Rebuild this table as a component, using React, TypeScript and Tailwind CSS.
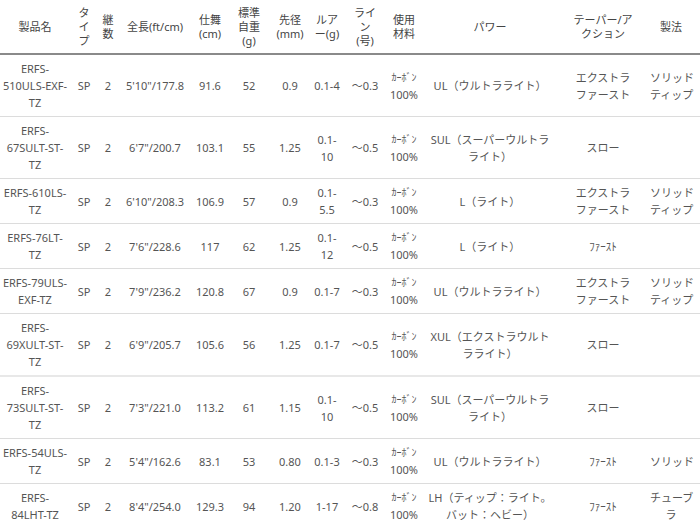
import React from "react";

type Row = {
  name: string[];
  len: string;
  close: string;
  wt: string;
  tip: string;
  lure: string[];
  line: string;
  power: string[];
  taper: string[];
  method: string[];
  thick?: boolean;
};

const rows: Row[] = [
  { name: ["ERFS-", "510ULS-EXF-", "TZ"], len: `5'10"/177.8`, close: "91.6", wt: "52", tip: "0.9", lure: ["0.1-4"], line: "〜0.3", power: ["UL（ウルトラライト）"], taper: ["エクストラ", "ファースト"], method: ["ソリッド", "ティップ"] },
  { name: ["ERFS-", "67SULT-ST-", "TZ"], len: `6'7"/200.7`, close: "103.1", wt: "55", tip: "1.25", lure: ["0.1-", "10"], line: "〜0.5", power: ["SUL（スーパーウルトラ", "ライト）"], taper: ["スロー"], method: [] },
  { name: ["ERFS-610LS-", "TZ"], len: `6'10"/208.3`, close: "106.9", wt: "57", tip: "0.9", lure: ["0.1-", "5.5"], line: "〜0.3", power: ["L（ライト）"], taper: ["エクストラ", "ファースト"], method: ["ソリッド", "ティップ"] },
  { name: ["ERFS-76LT-", "TZ"], len: `7'6"/228.6`, close: "117", wt: "62", tip: "1.25", lure: ["0.1-", "12"], line: "〜0.5", power: ["L（ライト）"], taper: ["ﾌｧｰｽﾄ"], method: [] },
  { name: ["ERFS-79ULS-", "EXF-TZ"], len: `7'9"/236.2`, close: "120.8", wt: "67", tip: "0.9", lure: ["0.1-7"], line: "〜0.3", power: ["UL（ウルトラライト）"], taper: ["エクストラ", "ファースト"], method: ["ソリッド", "ティップ"] },
  { name: ["ERFS-", "69XULT-ST-", "TZ"], len: `6'9"/205.7`, close: "105.6", wt: "56", tip: "1.25", lure: ["0.1-7"], line: "〜0.5", power: ["XUL（エクストラウルト", "ラライト）"], taper: ["スロー"], method: [], thick: true },
  { name: ["ERFS-", "73SULT-ST-", "TZ"], len: `7'3"/221.0`, close: "113.2", wt: "61", tip: "1.15", lure: ["0.1-", "10"], line: "〜0.5", power: ["SUL（スーパーウルトラ", "ライト）"], taper: ["スロー"], method: [] },
  { name: ["ERFS-54ULS-", "TZ"], len: `5'4"/162.6`, close: "83.1", wt: "53", tip: "0.80", lure: ["0.1-3"], line: "〜0.3", power: ["UL（ウルトラライト）"], taper: ["ﾌｧｰｽﾄ"], method: ["ソリッド"] },
  { name: ["ERFS-", "84LHT-TZ"], len: `8'4"/254.0`, close: "129.3", wt: "94", tip: "1.20", lure: ["1-17"], line: "〜0.8", power: ["LH（ティップ：ライト。", "バット：ヘビー）"], taper: ["ﾌｧｰｽﾄ"], method: ["チューブ", "ラ"] },
];

const widths = [70, 28, 20, 74, 36, 42, 40, 34, 42, 36, 136, 90, 52];

const headers: string[][] = [
  ["製品名"],
  ["タ", "イ", "プ"],
  ["継", "数"],
  ["全長(ft/cm)"],
  ["仕舞", "(cm)"],
  ["標準", "自重", "(g)"],
  ["先径", "(mm)"],
  ["ルア", "ー(g)"],
  ["ライ", "ン", "(号)"],
  ["使用", "材料"],
  ["パワー"],
  ["テーパー/ア", "クション"],
  ["製法"],
];

function Lines({ lines }: { lines: string[] }) {
  return (
    <>
      {lines.map((l, i) => (
        <div key={i}>{l}</div>
      ))}
    </>
  );
}

export default function App() {
  return (
    <div
      className="w-[700px] h-[526px] overflow-hidden bg-white text-[#555]"
      style={{ fontFamily: '"Noto Sans", "Noto Sans CJK JP", sans-serif' }}
    >
      <table className="table-fixed border-collapse w-[700px] text-[11px] whitespace-nowrap">
        <colgroup>
          {widths.map((w, i) => (
            <col key={i} style={{ width: w }} />
          ))}
        </colgroup>
        <thead>
          <tr>
            {headers.map((h, i) => (
              <th
                key={i}
                className={`font-normal text-[#444] leading-[14px] pt-[6px] pb-[5px] text-center align-middle border-b-2 border-[#8a8a8a] ${i === 12 ? "pl-[2px] pr-[8px]" : "px-0"}`}
              >
                <Lines lines={h} />
              </th>
            ))}
          </tr>
        </thead>
        <tbody>
          {rows.map((r, ri) => {
            const cells: string[][] = [
              r.name,
              ["SP"],
              ["2"],
              [r.len],
              [r.close],
              [r.wt],
              [r.tip],
              r.lure,
              [r.line],
              ["ｶｰﾎﾞﾝ", "100%"],
              r.power,
              r.taper,
              r.method,
            ];
            return (
              <tr key={ri}>
                {cells.map((c, ci) => (
                  <td
                    key={ci}
                    className={`leading-[17px] py-[5px] text-center align-middle ${r.thick ? "border-b-2 border-[#e8e8e8]" : "border-b border-[#dcdcdc]"} ${ci === 12 ? "pl-[2px] pr-[8px]" : "px-0"}`}
                  >
                    {ci === 9 ? (
                      <>
                        <div className="text-[10px] leading-[17px]">ｶｰﾎﾞﾝ</div>
                        <div>100%</div>
                      </>
                    ) : (
                      <Lines lines={c} />
                    )}
                  </td>
                ))}
              </tr>
            );
          })}
        </tbody>
      </table>
    </div>
  );
}
